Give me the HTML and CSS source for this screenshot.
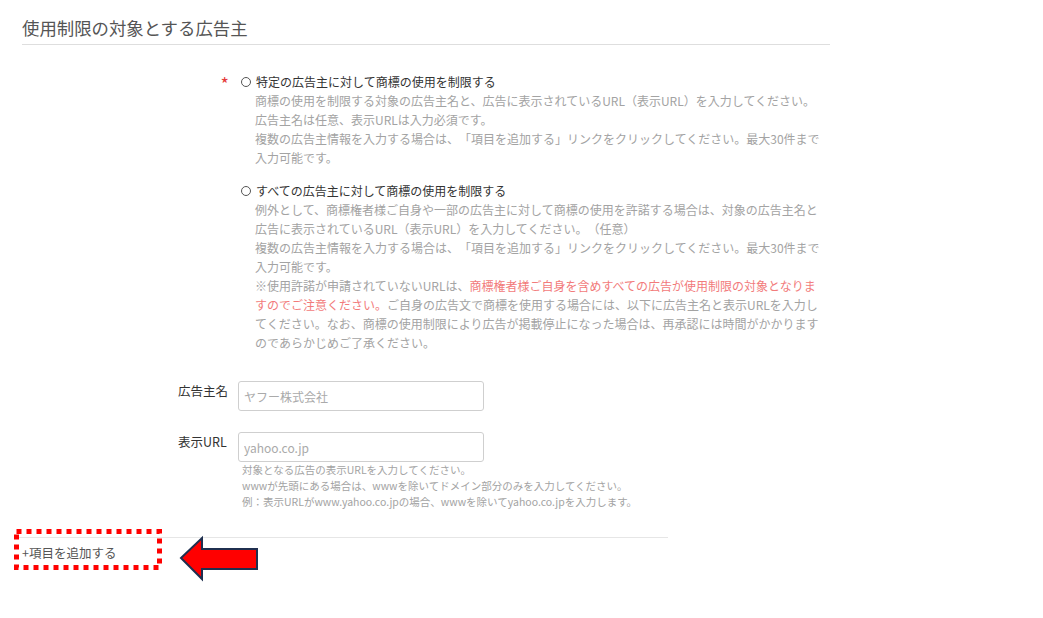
FILE: index.html
```html
<!DOCTYPE html>
<html lang="ja">
<head>
<meta charset="utf-8">
<link rel="stylesheet" href="styles.css">
</head>
<body>
<section class="section">
  <h2 class="title">使用制限の対象とする広告主</h2>
  <div class="form">
    <div class="row option-row">
      <div class="label"><span class="req">*</span></div>
      <div class="content">
        <div class="option"><span class="radio"></span>特定の広告主に対して商標の使用を制限する</div>
        <p class="desc">商標の使用を制限する対象の広告主名と、広告に表示されているURL（表示URL）を入力してください。<br>広告主名は任意、表示URLは入力必須です。<br>複数の広告主情報を入力する場合は、「項目を追加する」リンクをクリックしてください。最大30件まで入力可能です。</p>
      </div>
    </div>
    <div class="row option-row second">
      <div class="label"></div>
      <div class="content">
        <div class="option"><span class="radio"></span>すべての広告主に対して商標の使用を制限する</div>
        <p class="desc">例外として、商標権者様ご自身や一部の広告主に対して商標の使用を許諾する場合は、対象の広告主名と広告に表示されているURL（表示URL）を入力してください。（任意）<br>複数の広告主情報を入力する場合は、「項目を追加する」リンクをクリックしてください。最大30件まで入力可能です。<br>※使用許諾が申請されていないURLは、<span class="warn">商標権者様ご自身を含めすべての広告が使用制限の対象となりますのでご注意ください。</span>ご自身の広告文で商標を使用する場合には、以下に広告主名と表示URLを入力してください。なお、商標の使用制限により広告が掲載停止になった場合は、再承認には時間がかかりますのであらかじめご了承ください。</p>
      </div>
    </div>
    <div class="row field-row first-field">
      <div class="label field-label">広告主名</div>
      <div class="content"><input class="input" type="text" placeholder="ヤフー株式会社"></div>
    </div>
    <div class="row field-row">
      <div class="label field-label">表示URL</div>
      <div class="content">
        <input class="input" type="text" placeholder="yahoo.co.jp">
        <p class="help">対象となる広告の表示URLを入力してください。<br>wwwが先頭にある場合は、wwwを除いてドメイン部分のみを入力してください。<br>例：表示URLがwww.yahoo.co.jpの場合、wwwを除いてyahoo.co.jpを入力します。</p>
      </div>
    </div>
  </div>
  <div class="footer">
    <a class="add-link" href="#">+項目を追加する</a>
    <svg class="dotbox" width="152" height="44" viewBox="0 0 152 44">
      <rect x="2.5" y="2.5" width="143" height="36" fill="none" stroke="#ff0000" stroke-width="5" stroke-dasharray="5 5"/>
    </svg>
    <svg class="arrow" width="80" height="44" viewBox="0 0 80 44">
      <polygon points="1,21 22,1 22,12 77,12 77,32 22,32 22,42" fill="#ff0000" stroke="#1f2f4f" stroke-width="2" stroke-linejoin="miter"/>
    </svg>
  </div>
</section>
</body>
</html>
```
FILE: styles.css
```css
* { box-sizing: border-box; }
html, body { margin: 0; padding: 0; background: #fff; }
body {
  font-family: "Noto Sans CJK JP", "Noto Sans", sans-serif;
  color: #333;
  text-spacing-trim: space-all;
  min-height: 618px;
}
.section {
  margin-left: 22px;
  width: 808px;
  padding-top: 16px;
}
.title {
  margin: 0;
  font-size: 17.4px;
  font-weight: normal;
  line-height: 24px;
  color: #555;
  padding-bottom: 4px;
  border-bottom: 1px solid #dedede;
}
.form {
  margin-left: 156px;
  padding-top: 27px;
}
.row {
  display: grid;
  grid-template-columns: 60px 588px;
}
.second { margin-top: 14px; }
.first-field { margin-top: 29px; }
.field-row + .field-row { margin-top: 21px; }
.label {
  text-align: right;
  padding-right: 9px;
}
.req {
  display: inline-block;
  color: #e53a3a;
  font-size: 18px;
  line-height: 14px;
  margin-top: 1px;
}
.option {
  font-size: 12px;
  line-height: 19px;
  color: #333;
  padding-left: 3px;
  display: flex;
  align-items: center;
}
.radio {
  width: 10px;
  height: 10px;
  border: 1px solid #555;
  border-radius: 50%;
  margin-right: 5px;
  flex: none;
}
.desc {
  margin: 0;
  padding-left: 17px;
  font-size: 12px;
  line-height: 19px;
  color: #a3a3a3;
}
.warn { color: #f27b7b; }
.field-label {
  text-align: left;
  padding: 0;
  font-size: 12.5px;
  line-height: 19px;
  color: #333;
}
.input {
  display: block;
  width: 246px;
  height: 30px;
  border: 1px solid #cfcfcf;
  border-radius: 3px;
  padding: 0 5px;
  font-family: inherit;
  font-size: 12px;
  color: #333;
  outline: none;
}
.input::placeholder { color: #aaa; }
.help {
  margin: 0;
  padding-left: 4px;
  font-size: 10.5px;
  line-height: 16px;
  color: #a3a3a3;
}
.footer {
  position: relative;
  margin-left: -4px;
  margin-top: 27px;
  width: 650px;
  border-top: 1px solid #e6e6e6;
  padding: 1px 0 40px 4px;
}
.add-link {
  font-size: 12.5px;
  line-height: 18px;
  color: #555;
  text-decoration: none;
}
.dotbox {
  position: absolute;
  display: block;
  overflow: visible;
  left: -4px;
  top: -9px;
}
.arrow {
  position: absolute;
  display: block;
  overflow: visible;
  left: 162px;
  top: -1px;
}
```
